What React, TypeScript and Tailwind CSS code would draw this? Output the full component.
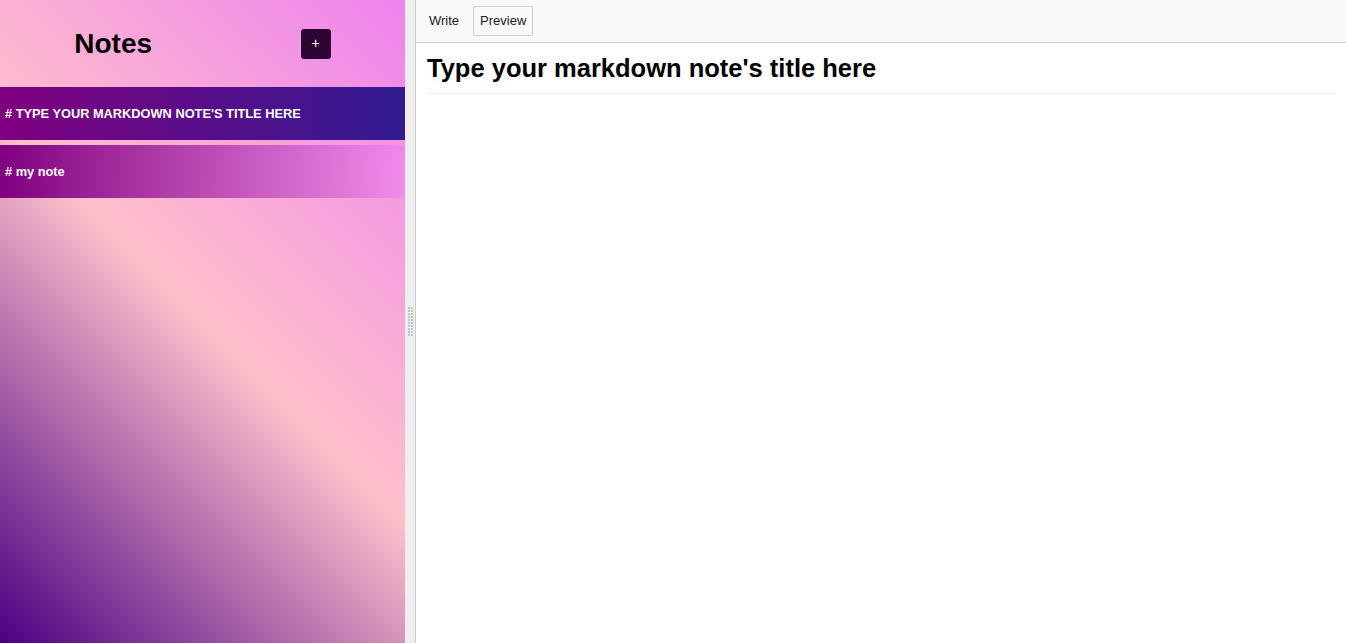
import React from "react";

export default function App() {
  const dots = Array.from({ length: 20 });
  return (
    <div
      className="flex h-[643px] w-full overflow-hidden bg-white"
      style={{ fontFamily: '"Liberation Sans", Arial, sans-serif' }}
    >
      <aside className="flex h-full w-[405px] shrink-0 flex-col bg-[linear-gradient(45deg,#4b0082,#ffc0cb,#ee82ee)]">
        <div className="flex h-[87px] items-center justify-around">
          <h1 className="text-[28px] font-bold leading-none text-black">Notes</h1>
          <button className="flex h-[30px] w-[30px] items-center justify-center rounded-[3px] bg-[#2c0532] text-[14px] text-white">
            +
          </button>
        </div>
        <div className="flex flex-col gap-[5px]">
          <div className="flex h-[53px] items-center bg-[linear-gradient(to_right,#800080,#311b92)] pl-[5px] text-[12.8px] font-bold text-white">
            # TYPE YOUR MARKDOWN NOTE'S TITLE HERE
          </div>
          <div className="flex h-[53px] items-center bg-[linear-gradient(to_right,#800080,rgba(238,130,238,0.6))] pl-[5px] text-[12.8px] font-bold text-white">
            # my note
          </div>
        </div>
      </aside>
      <div className="flex h-full w-[11px] shrink-0 items-center justify-center border-r border-[#cccccc] bg-[#eeeeee]">
        <div className="grid grid-cols-2 gap-x-[1px] gap-y-[1px]">
          {dots.map((_, i) => (
            <div key={i} className="h-[2px] w-[2px] bg-[#c4c4c4]" />
          ))}
        </div>
      </div>
      <main className="flex min-w-0 flex-1 flex-col">
        <div className="flex h-[43px] items-center gap-[7px] border-b border-[#c8c8c8] bg-[#f9f9f9] pl-[6px]">
          <button className="h-[30px] rounded-[2px] border border-transparent px-[6px] text-[13px] text-[#222]">
            Write
          </button>
          <button className="h-[30px] rounded-[2px] border border-[#cfcfcf] px-[6px] text-[13px] text-[#222]">
            Preview
          </button>
        </div>
        <div className="px-[10px] pt-[9px]">
          <h1 className="border-b border-[#eeeeee] pb-[9px] pl-[1px] text-[25.5px] font-bold leading-[32px] text-black">
            Type your markdown note's title here
          </h1>
        </div>
      </main>
    </div>
  );
}
